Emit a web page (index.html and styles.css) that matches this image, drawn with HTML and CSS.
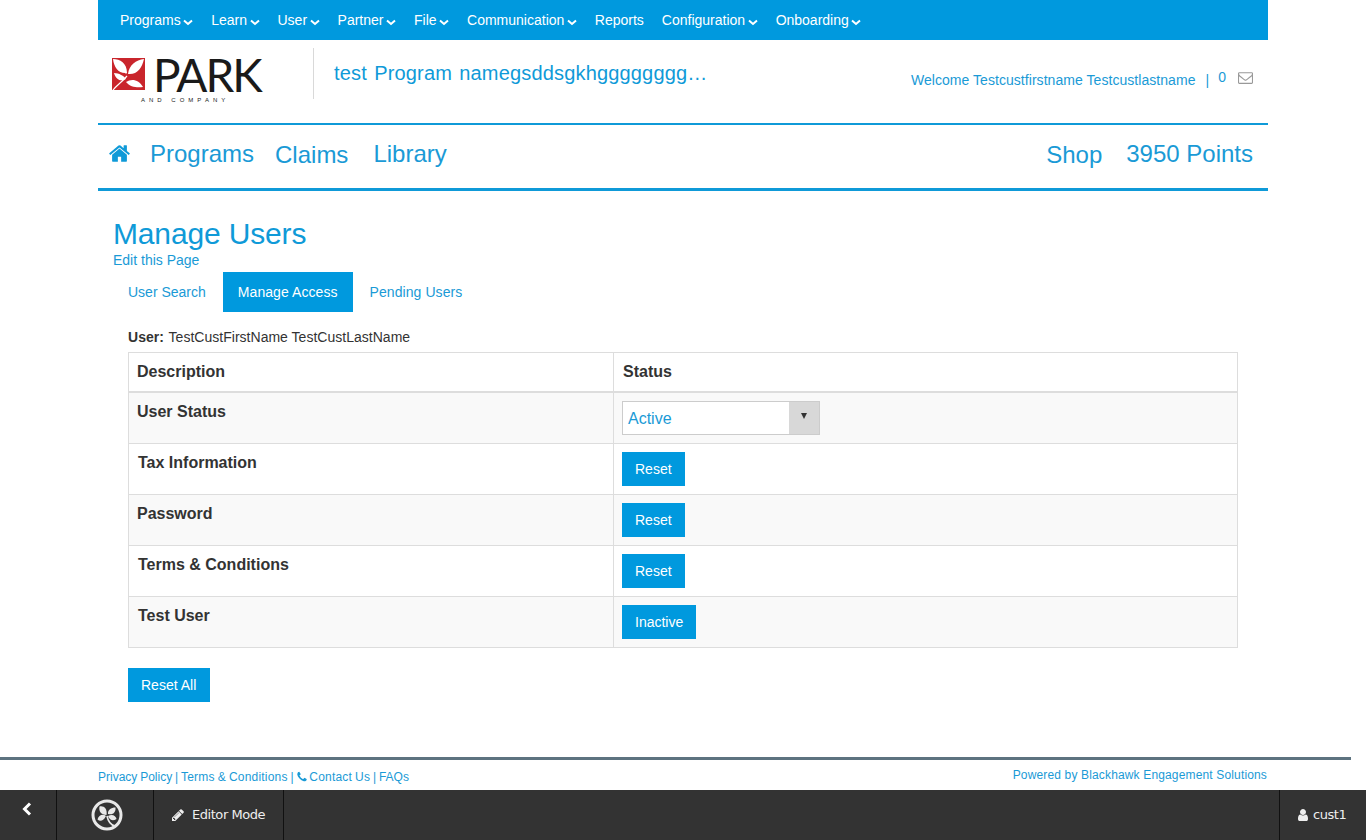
FILE: index.html
```html
<!DOCTYPE html>
<html>
<head>
	<meta charset="utf-8">
	<title>Manage Users</title>
	<link rel="stylesheet" href="styles.css">
</head>
<body>
	<div class="container">
		<ul class="top-nav">
			<li><a>Programs<svg class="caret" viewBox="0 0 10 7"><path d="M1 1.5l4 3.5 4-3.5"/></svg></a></li>
			<li><a>Learn<svg class="caret" viewBox="0 0 10 7"><path d="M1 1.5l4 3.5 4-3.5"/></svg></a></li>
			<li><a>User<svg class="caret" viewBox="0 0 10 7"><path d="M1 1.5l4 3.5 4-3.5"/></svg></a></li>
			<li><a>Partner<svg class="caret" viewBox="0 0 10 7"><path d="M1 1.5l4 3.5 4-3.5"/></svg></a></li>
			<li><a>File<svg class="caret" viewBox="0 0 10 7"><path d="M1 1.5l4 3.5 4-3.5"/></svg></a></li>
			<li><a>Communication<svg class="caret" viewBox="0 0 10 7"><path d="M1 1.5l4 3.5 4-3.5"/></svg></a></li>
			<li><a>Reports</a></li>
			<li><a>Configuration<svg class="caret" viewBox="0 0 10 7"><path d="M1 1.5l4 3.5 4-3.5"/></svg></a></li>
			<li><a>Onboarding<svg class="caret" viewBox="0 0 10 7"><path d="M1 1.5l4 3.5 4-3.5"/></svg></a></li>
		</ul>

		<div class="header">
			<div class="logo">
				<div class="logo-row">
					<svg class="logo-mark" viewBox="0 0 33 32">
						<rect width="33" height="32" fill="#c9252c"/>
						<path d="M1 1C8 1 15 5 15 15C14 16 14 16 13 15C6 15 2 9 1 1Z" fill="#fff"/>
						<path d="M32 1C24 2 17 7 16 16C25 17 30 10 32 1Z" fill="#fff"/>
						<path d="M2 15C7 15 12 18 14 21C9 24 4 22 2 15Z" fill="#fff"/>
						<path d="M14 24C20 20 27 22 31 29C25 30 18 29 14 24Z" fill="#fff"/>
						<path d="M1 32C5 27 10 24 15 18" fill="none" stroke="#fff" stroke-width="1.2"/>
					</svg>
					<span class="logo-name">PARK</span>
				</div>
				<span class="logo-sub">AND COMPANY</span>
			</div>
			<div class="program-name">test Program namegsddsgkhgggggggg…</div>
			<div class="welcome">
				<a>Welcome Testcustfirstname Testcustlastname</a>
				<span class="sep">|</span>
				<a class="msg-count">0</a>
				<svg class="envelope" viewBox="0 0 1792 1792"><path d="M1664 1504v-768q-32 36-69 66-268 206-426 338-51 43-83 67t-86.5 48.5-102.5 24.5h-2q-48 0-102.5-24.5t-86.5-48.5-83-67q-158-132-426-338-37-30-69-66v768q0 13 9.5 22.5t22.5 9.5h1472q13 0 22.5-9.5t9.5-22.5zm0-1051v-24.5l-.5-13-3-12.5-5.5-9-9-7.5-14-2.5h-1472q-13 0-22.5 9.5t-9.5 22.5q0 168 147 284 193 152 401 317 6 5 35 29.5t46 37.5 44.5 31.5 50.5 27.5 43 9h2q20 0 43-9t50.5-27.5 44.5-31.5 46-37.5 35-29.5q208-165 401-317 54-43 100.5-115.5t46.5-131.5zm128-37v1088q0 66-47 113t-113 47h-1472q-66 0-113-47t-47-113v-1088q0-66 47-113t113-47h1472q66 0 113 47t47 113z"/></svg>
			</div>
		</div>

		<div class="main-nav">
			<svg class="home" viewBox="0 0 1792 1792"><path d="M1472 992v480q0 26-19 45t-45 19h-384v-384h-256v384h-384q-26 0-45-19t-19-45v-480q0-1 .5-3t.5-3l575-474 575 474q1 2 1 6zm223-69l-62 74q-8 9-21 11h-3q-13 0-21-7l-692-577-692 577q-12 8-24 7-13-2-21-11l-62-74q-8-10-7-23.5t11-21.5l719-599q32-26 76-26t76 26l244 204v-195q0-14 9-23t23-9h192q14 0 23 9t9 23v408l219 182q10 8 11 21.5t-7 23.5z"/></svg>
			<a class="nav-programs">Programs</a>
			<a class="nav-claims">Claims</a>
			<a class="nav-library">Library</a>
			<a class="nav-shop">Shop</a>
			<a class="nav-points">3950 Points</a>
		</div>
	</div>

	<div class="container content">
		<h1 class="page-title">Manage Users</h1>
		<a class="edit-link">Edit this Page</a>
		<ul class="tabs">
			<li><a>User Search</a></li>
			<li class="active"><a>Manage Access</a></li>
			<li class="pending"><a>Pending Users</a></li>
		</ul>
		<div class="tab-body">
			<p class="user-line"><b>User:</b> TestCustFirstName TestCustLastName</p>
			<table class="access-table">
				<thead>
					<tr><th class="col-desc">Description</th><th>Status</th></tr>
				</thead>
				<tbody>
					<tr>
						<td class="label">User Status</td>
						<td>
							<div class="select-box">
								<span class="select-value">Active</span>
								<span class="select-arrow"><i></i></span>
							</div>
						</td>
					</tr>
					<tr><td class="label shift">Tax Information</td><td><a class="btn">Reset</a></td></tr>
					<tr><td class="label">Password</td><td><a class="btn">Reset</a></td></tr>
					<tr><td class="label shift">Terms &amp; Conditions</td><td><a class="btn">Reset</a></td></tr>
					<tr><td class="label shift">Test User</td><td><a class="btn">Inactive</a></td></tr>
				</tbody>
			</table>
			<a class="btn btn-all">Reset All</a>
		</div>
	</div>

	<div class="footer">
		<div class="footer-links">
			<a>Privacy Policy</a> | <a class="wide">Terms &amp; Conditions</a> |
			<svg class="phone" viewBox="0 0 1792 1792"><path d="M1600 1240q0 27-10 70.5t-21 68.5q-21 50-122 106-94 51-186 51-27 0-53-3.5t-57.5-12.5-47-14.5-55.5-20.5-49-18q-98-35-175-83-127-79-264-216t-216-264q-48-77-83-175-3-9-18-49t-20.5-55.5-14.5-47-12.5-57.5-3.5-53q0-92 51-186 56-101 106-122 25-11 68.5-21t70.5-10q14 0 21 3 18 6 53 76 11 19 30 54t35 63.5 31 53.5q3 4 17.5 25t21.5 35.5 7 28.5q0 20-28.5 50t-62 55-62 53-28.5 46q0 9 5 22.5t8.5 20.5 14 24 11.5 19q76 137 174 235t235 174q2 1 19 11.5t24 14 20.5 8.5 22.5 5q18 0 46-28.5t53-62 55-62 50-28.5q14 0 28.5 7t35.5 21.5 25 17.5q25 15 53.5 31t63.5 35 54 30q70 35 76 53 3 7 3 21z"/></svg>
			<a class="wide">Contact Us</a> | <a>FAQs</a>
		</div>
		<div class="powered">Powered by Blackhawk Engagement Solutions</div>
	</div>

	<div class="toolbar">
		<div class="tool tool-back">
			<svg viewBox="0 0 12 14" class="back-icon"><path d="M9 1.5L3.5 7 9 12.5"/></svg>
		</div>
		<div class="tool tool-logo">
			<svg viewBox="0 0 32 32" class="orchard">
				<circle cx="16" cy="16" r="14" fill="none" stroke="#e8e8e8" stroke-width="3"/>
				<path d="M15.5 16C10 16 7.5 12 8.5 7.5C13 6.5 16.5 10 15.5 16Z" fill="#e8e8e8"/>
				<path d="M17 15C16.5 11 20 8.5 24.5 8.5C25 13 22 16.5 17 15Z" fill="#e8e8e8"/>
				<path d="M15 17C12 22.5 9 22.5 6.5 20.5C7.5 16 12 14.5 15 17Z" fill="#e8e8e8"/>
				<path d="M17 17C21 14.5 25 16.5 25.5 20C22 22.5 19 21.5 17 17Z" fill="#e8e8e8"/>
				<path d="M16 17C17 22 20 26 24 27" fill="none" stroke="#e8e8e8" stroke-width="1.6"/>
			</svg>
		</div>
		<div class="tool tool-editor">
			<svg class="tool-icon" viewBox="0 0 1792 1792"><path d="M491 1536l91-91-235-235-91 91v107h128v128h107zm523-928q0-22-22-22-10 0-17 7l-542 542q-7 7-7 17 0 22 22 22 10 0 17-7l542-542q7-7 7-17zm-54-192l416 416-832 832h-416v-416zm683 96q0 53-37 90l-166 166-416-416 166-165q36-38 90-38 53 0 91 38l235 234q37 39 37 91z"/></svg>
			Editor Mode
		</div>
		<div class="tool tool-user">
			<svg class="tool-icon" viewBox="0 0 1792 1792"><path d="M1536 1399q0 109-62.5 187t-150.5 78h-854q-88 0-150.5-78t-62.5-187q0-85 8.5-160.5t31.5-152 58.5-131 94-89 134.5-34.5q131 128 313 128t313-128q76 0 134.5 34.5t94 89 58.5 131 31.5 152 8.5 160.5zm-256-887q0 159-112.5 271.5t-271.5 112.5-271.5-112.5-112.5-271.5 112.5-271.5 271.5-112.5 271.5 112.5 112.5 271.5z"/></svg>
			cust1
		</div>
	</div>
</body>
</html>
```

FILE: styles.css
```css
* {
	box-sizing: border-box;
}

html, body {
	margin: 0;
	height: 840px;
	overflow: hidden;
}

body {
	display: flex;
	flex-direction: column;
	font-family: "Liberation Sans", Arial, sans-serif;
	font-size: 14px;
	line-height: 20px;
	color: #333;
}

a {
	color: #1a9ad6;
	text-decoration: none;
}

.container {
	width: 1170px;
	margin: 0 auto;
}

/* top bar */
.top-nav {
	display: flex;
	gap: 18px;
	height: 40px;
	margin: 0;
	padding: 0 0 0 22px;
	list-style: none;
	background-color: #0099de;
}

.top-nav a {
	display: flex;
	align-items: center;
	height: 40px;
	color: #fff;
}

.caret {
	width: 10px;
	height: 7px;
	margin: 5px 0 0 2.5px;
	fill: none;
	stroke: #fff;
	stroke-width: 2;
}

/* logo row */
.header {
	display: flex;
	height: 85px;
	border-bottom: 2px solid #0f9ad8;
	padding-top: 8px;
}

.logo {
	display: flex;
	flex-direction: column;
	width: 216px;
	height: 51px;
	padding: 10px 0 0 14px;
	border-right: 1px solid #d9d9d9;
}

.logo-row {
	display: flex;
	gap: 8px;
	height: 33px;
}

.logo-mark {
	width: 33px;
	height: 32px;
	flex: none;
}

.logo-name {
	font-family: Lato, sans-serif;
	font-size: 46px;
	font-weight: 400;
	line-height: 33px;
	letter-spacing: -2px;
	color: #1a1a1a;
}

.logo-sub {
	margin: 5px 0 0 29px;
	font-size: 6px;
	line-height: 9px;
	letter-spacing: 4px;
	white-space: nowrap;
	color: #222;
}

.program-name {
	margin: 13px 0 0 20px;
	font-size: 20px;
	line-height: 24px;
	letter-spacing: .17px;
	word-spacing: 1.5px;
	color: #0f9ad8;
	white-space: nowrap;
}

.welcome {
	display: flex;
	align-items: flex-start;
	margin: 22px 15px 0 auto;
	letter-spacing: .05px;
}

.welcome .sep {
	margin: 0 9px 0 10px;
	color: #1a9ad6;
}

.msg-count {
	margin-top: -3px;
	margin-right: 12px;
}

.envelope {
	width: 15px;
	height: 15px;
	fill: #999;
}

/* big nav */
.main-nav {
	display: flex;
	align-items: center;
	height: 66px;
	padding: 0 15px 6px 10px;
	border-bottom: 3px solid #0f9ad8;
	font-size: 24px;
}

.home {
	width: 23px;
	height: 23px;
	margin-right: 19px;
	fill: #0f9ad8;
}

.nav-programs {
	margin-right: 21px;
}

.nav-claims {
	margin-right: 25px;
	padding-top: 2px;
}

.nav-shop {
	margin-left: auto;
	margin-right: 24px;
	padding-top: 2px;
}

/* page content */
.content {
	flex: 1;
	padding: 25px 15px 0;
}

.page-title {
	margin: 0;
	font-size: 30px;
	font-weight: 400;
	line-height: 35px;
	letter-spacing: -.15px;
	color: #0f9ad8;
}

.edit-link {
	display: block;
	line-height: 18px;
}

.tabs {
	display: flex;
	gap: 2px;
	margin: 3px 0 0;
	padding: 0;
	list-style: none;
}

.tabs a {
	display: block;
	padding: 10px 15px;
}

.tabs .active a {
	color: #fff;
	background-color: #0099de;
	letter-spacing: .07px;
}

.tabs .pending a {
	letter-spacing: .07px;
}

.tab-body {
	padding: 15px 15px 0;
}

.user-line {
	margin: 0 0 5px;
	letter-spacing: .02px;
}

.user-line b {
	margin-right: 1px;
}

.access-table {
	width: 1110px;
	margin-bottom: 20px;
	border-collapse: collapse;
	table-layout: fixed;
	font-size: 14px;
}

.access-table th, .access-table td {
	padding: 8px;
	border: 1px solid #ddd;
	text-align: left;
	vertical-align: top;
	height: 51px;
}

.access-table th {
	height: 39px;
	padding: 8px 9px;
	font-size: 16px;
	line-height: 22px;
	color: #333;
	border-bottom-width: 2px;
}

.access-table .col-desc {
	width: 485px;
	padding-left: 8px;
}

.access-table .label {
	padding-top: 9px;
	font-size: 16px;
	font-weight: 700;
	line-height: 20px;
}

.access-table .shift {
	padding-left: 9px;
}

.access-table tbody tr:nth-child(odd) {
	background-color: #f9f9f9;
}

.btn {
	display: inline-block;
	height: 34px;
	padding: 7px 13px;
	color: #fff;
	background-color: #0099de;
}

.btn-all {
	padding-right: 13.5px;
}

.select-box {
	display: flex;
	width: 198px;
	height: 34px;
	border: 1px solid #ccc;
	background-color: #fff;
}

.select-value {
	flex: 1;
	padding: 7px 5px 0;
	font-size: 16px;
	color: #1a9ad6;
}

.select-arrow {
	display: flex;
	justify-content: center;
	width: 30px;
	padding: 11px 1px 0 0;
	background-color: #d8d8d8;
}

.select-arrow i {
	width: 0;
	height: 0;
	border-style: solid;
	border-width: 6px 3.5px 0;
	border-color: #333 transparent transparent;
}

/* footer */
.footer {
	display: flex;
	justify-content: space-between;
	width: 1351px;
	height: 33px;
	padding: 0 84px 0 98px;
	border-top: 3px solid #5d7380;
	font-size: 12px;
	color: #1a9ad6;
}

.footer-links {
	padding-top: 7px;
	word-spacing: -.5px;
}

.footer-links .wide {
	letter-spacing: .2px;
}

.phone {
	width: 12px;
	height: 12px;
	margin-right: -2px;
	vertical-align: -2px;
	fill: #1a9ad6;
}

.powered {
	padding-top: 5px;
	letter-spacing: .15px;
}

/* bottom toolbar */
.toolbar {
	display: flex;
	height: 50px;
	background-color: #333;
	color: #eee;
	font-family: "DejaVu Sans", sans-serif;
	font-size: 13px;
	letter-spacing: -.45px;
}

.tool {
	display: flex;
	align-items: center;
	border-right: 1px solid #111;
}

.tool-back {
	width: 57px;
	align-items: flex-start;
	justify-content: center;
	padding: 12px 2px 0 0;
}

.back-icon {
	width: 12px;
	height: 14px;
	fill: none;
	stroke: #fff;
	stroke-width: 3;
}

.tool-logo {
	width: 97px;
	justify-content: center;
	padding-left: 3px;
}

.orchard {
	width: 32px;
	height: 32px;
}

.tool-editor {
	width: 130px;
	padding-left: 17px;
	gap: 7px;
}

.tool-icon {
	width: 14px;
	height: 14px;
	fill: #eee;
}

.tool-user {
	margin-left: auto;
	width: 87px;
	padding-left: 16px;
	gap: 3px;
	border-right: 0;
	border-left: 1px solid #111;
}
```
